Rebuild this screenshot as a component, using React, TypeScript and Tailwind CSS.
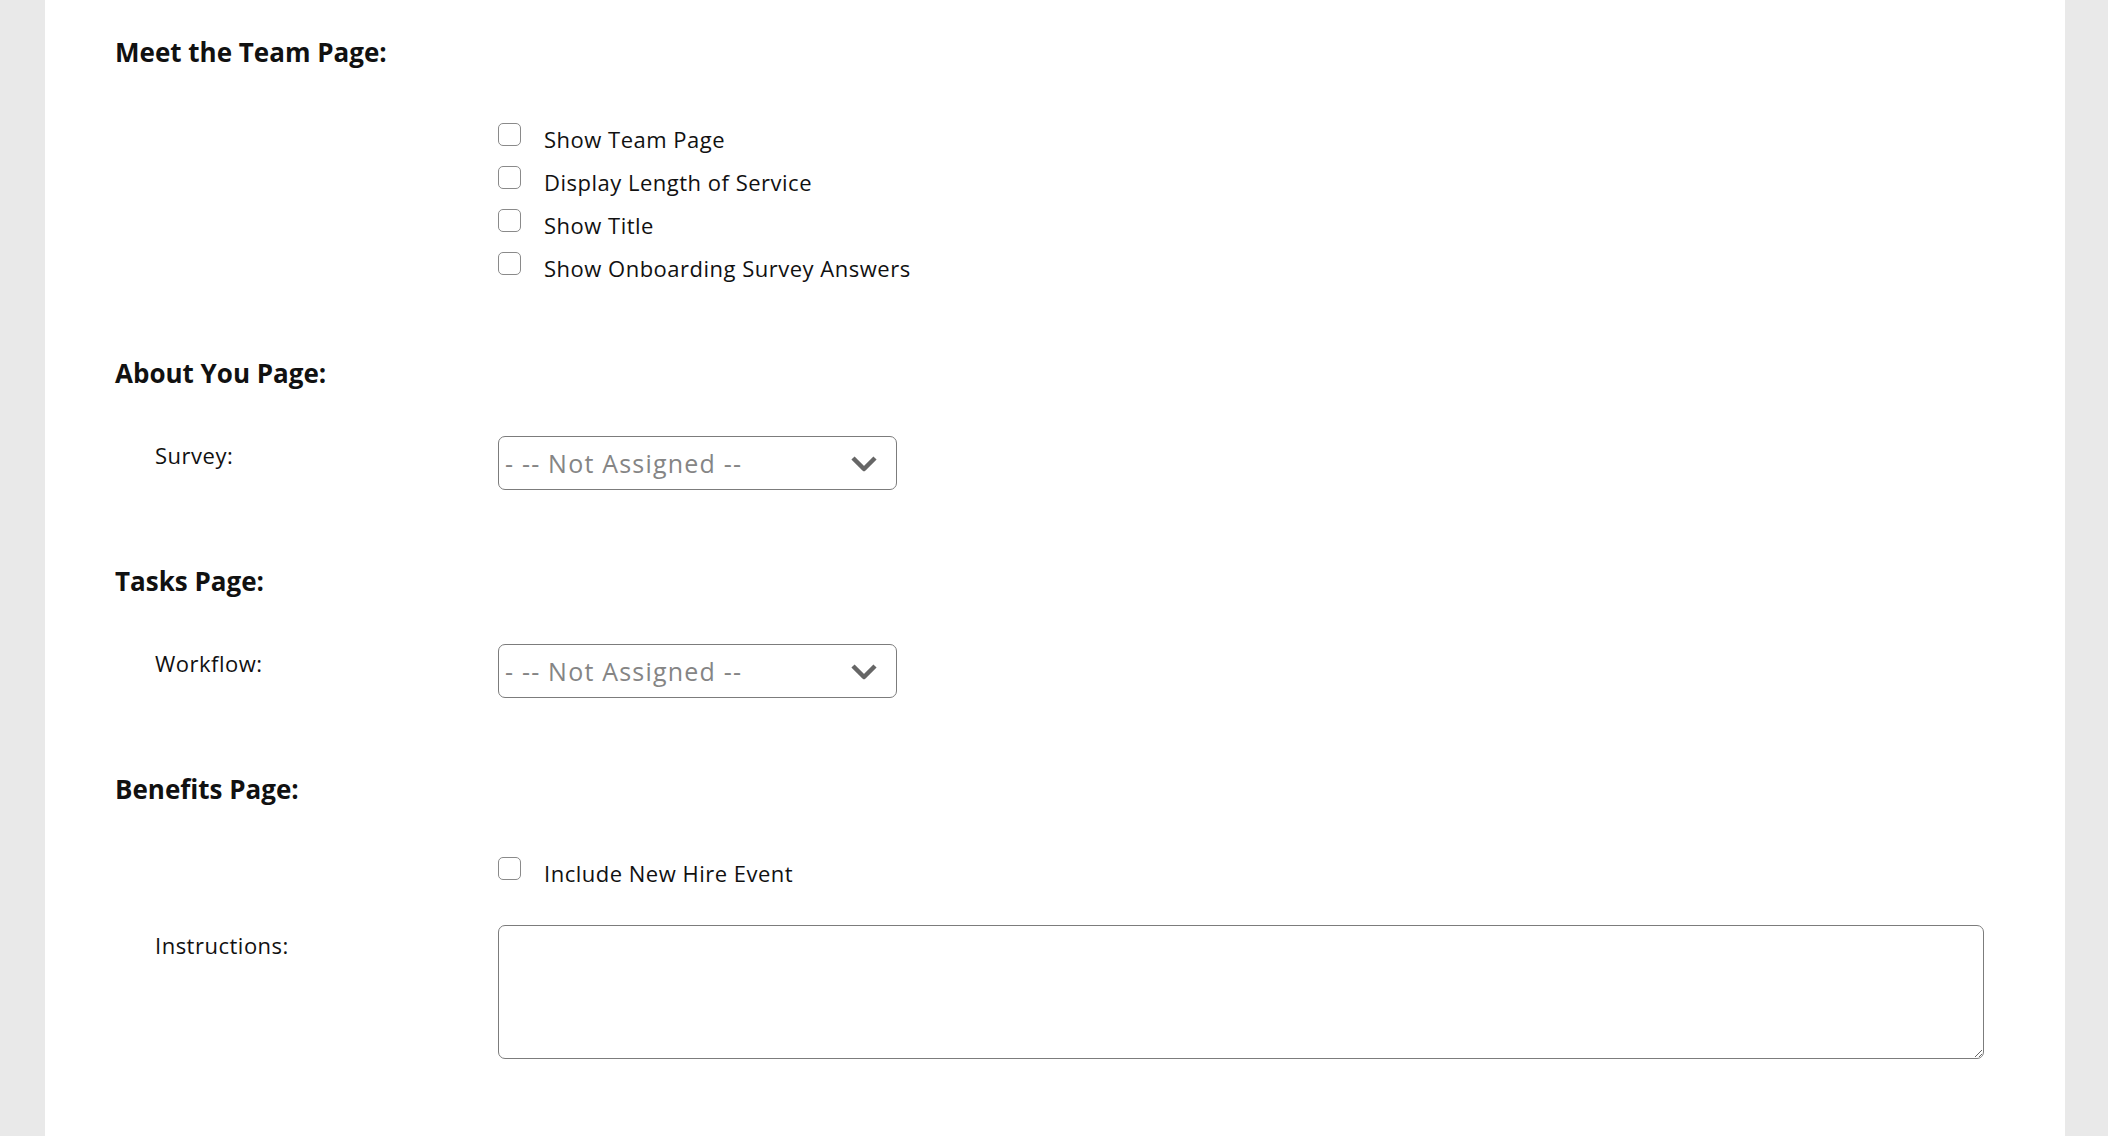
import React from 'react'

const font = { fontFamily: '"Open Sans", "Liberation Sans", sans-serif' }

function Box({ label }: { label: string }) {
    return (
        <label className="flex items-center h-[43px] cursor-pointer">
            <input
                type="checkbox"
                className="appearance-none w-[23px] h-[23px] border-[1.5px] border-[#8a8a8a] rounded-[5px] bg-white shrink-0 -mt-[2px]"
            />
            <span className="ml-[23px] mt-[6px] text-[22px] tracking-[0.5px] text-[#111] leading-none">{label}</span>
        </label>
    )
}

function Heading({ children }: { children: React.ReactNode }) {
    return <h2 className="text-[26px] font-bold text-[#111] leading-[30px]">{children}</h2>
}

function SelectBox() {
    return (
        <div className="relative w-[399px] h-[54px] border-[1.5px] border-[#7c7c7c] rounded-[7px] bg-white flex items-center">
            <span className="pl-[6px] text-[25px] tracking-[1.2px] text-[#858585] leading-none">- -- Not Assigned --</span>
            <svg className="absolute right-[19px] top-[19px]" width="26" height="16" viewBox="0 0 26 16">
                <polyline points="2,2 13,13 24,2" fill="none" stroke="#666" strokeWidth="4.5" strokeLinejoin="round" />
            </svg>
        </div>
    )
}

export default function App() {
    return (
        <div className="min-h-[1136px] bg-[#e9e9e9] flex" style={font}>
            <div className="ml-[45px] w-[2020px] min-h-[1136px] bg-white pl-[70px] pt-[37px]">
                <Heading>Meet the Team Page:</Heading>

                <div className="ml-[383px] mt-[47px]">
                    <Box label="Show Team Page" />
                    <Box label="Display Length of Service" />
                    <Box label="Show Title" />
                    <Box label="Show Onboarding Survey Answers" />
                </div>

                <div className="mt-[72px]">
                    <Heading>About You Page:</Heading>
                </div>

                <div className="grid grid-cols-[383px_1fr] mt-[48px]">
                    <div className="pl-[40px] pt-[3px] text-[22px] text-[#111] tracking-[0.5px]">Survey:</div>
                    <SelectBox />
                </div>

                <div className="mt-[76px]">
                    <Heading>Tasks Page:</Heading>
                </div>

                <div className="grid grid-cols-[383px_1fr] mt-[48px]">
                    <div className="pl-[40px] pt-[3px] text-[22px] text-[#111] tracking-[0.5px]">Workflow:</div>
                    <SelectBox />
                </div>

                <div className="mt-[76px]">
                    <Heading>Benefits Page:</Heading>
                </div>

                <div className="ml-[383px] mt-[44px]">
                    <Box label="Include New Hire Event" />
                </div>

                <div className="grid grid-cols-[383px_1fr] mt-[34px]">
                    <div className="pl-[40px] pt-[4px] text-[22px] text-[#111] tracking-[0.5px]">Instructions:</div>
                    <textarea className="w-[1486px] h-[134px] border-[1.5px] border-[#7c7c7c] rounded-[7px] bg-white" />
                </div>
            </div>
        </div>
    )
}
